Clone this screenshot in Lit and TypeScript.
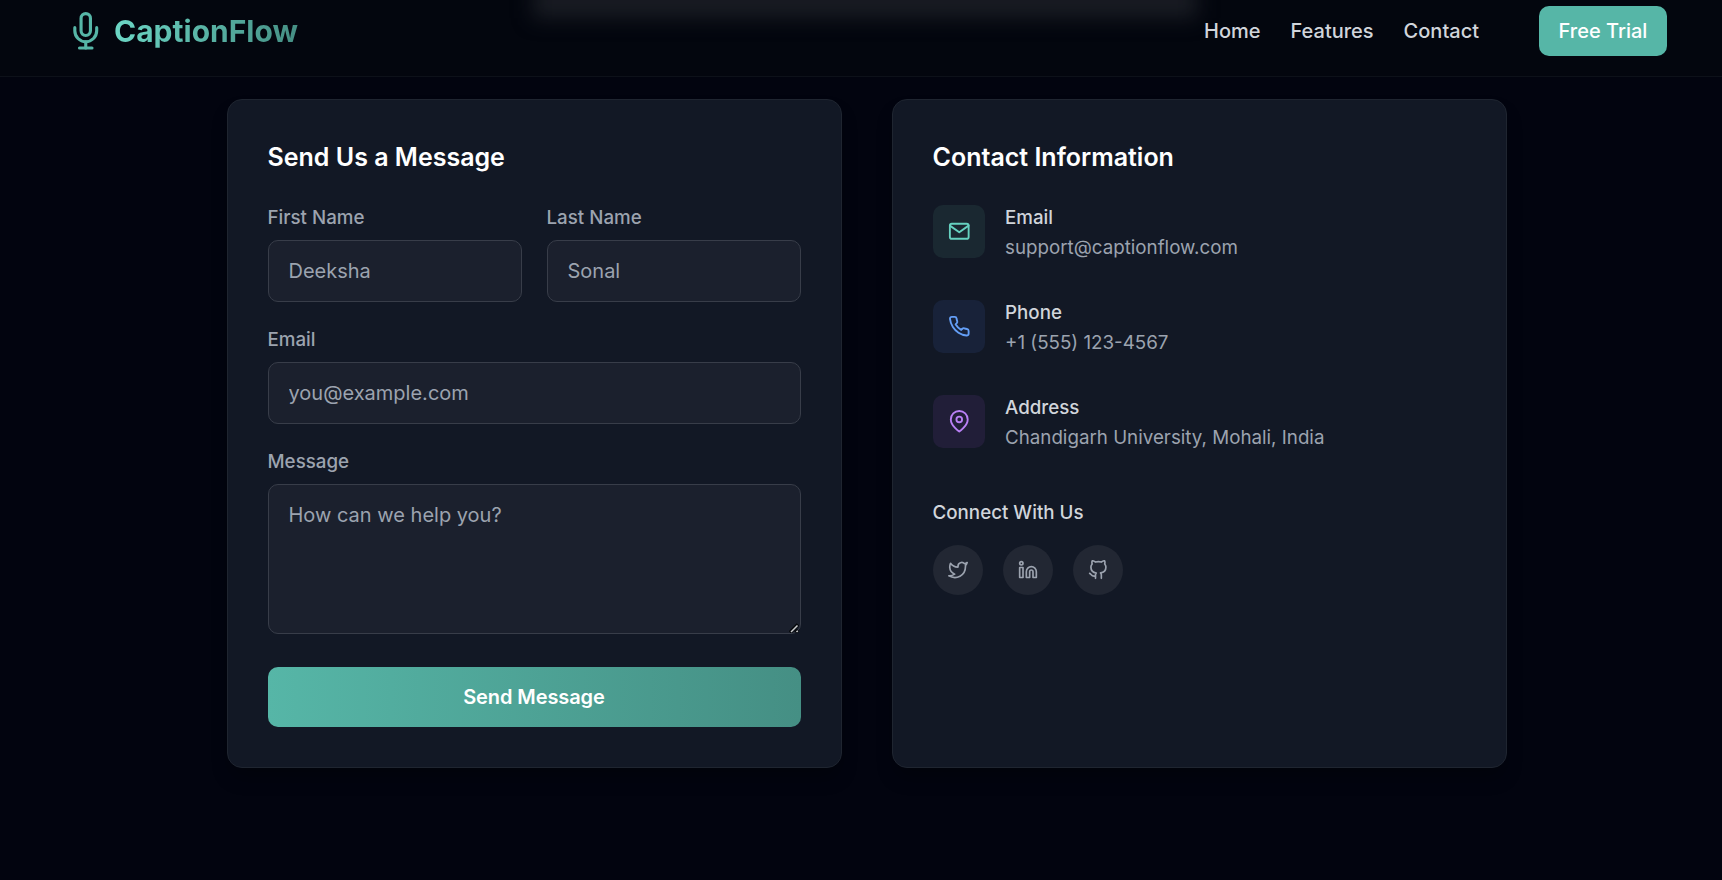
import { LitElement, html, css, svg } from "lit";
import { customElement, property } from "lit/decorators.js";

const icons: Record<string, unknown> = {
  mic: svg`<path d="M12 1a3 3 0 0 0-3 3v8a3 3 0 0 0 6 0V4a3 3 0 0 0-3-3z"/><path d="M19 10v2a7 7 0 0 1-14 0v-2"/><line x1="12" y1="19" x2="12" y2="23"/><line x1="8" y1="23" x2="16" y2="23"/>`,
  mail: svg`<path d="M4 4h16c1.1 0 2 .9 2 2v12c0 1.1-.9 2-2 2H4c-1.1 0-2-.9-2-2V6c0-1.1.9-2 2-2z"/><polyline points="22,6 12,13 2,6"/>`,
  phone: svg`<path d="M22 16.92v3a2 2 0 0 1-2.18 2 19.79 19.79 0 0 1-8.63-3.07 19.5 19.5 0 0 1-6-6 19.79 19.79 0 0 1-3.07-8.67A2 2 0 0 1 4.11 2h3a2 2 0 0 1 2 1.72 12.84 12.84 0 0 0 .7 2.81 2 2 0 0 1-.45 2.11L8.09 9.91a16 16 0 0 0 6 6l1.27-1.27a2 2 0 0 1 2.11-.45 12.84 12.84 0 0 0 2.81.7A2 2 0 0 1 22 16.92z"/>`,
  pin: svg`<path d="M21 10c0 7-9 13-9 13s-9-6-9-13a9 9 0 0 1 18 0z"/><circle cx="12" cy="10" r="3"/>`,
  twitter: svg`<path d="M23 3a10.9 10.9 0 0 1-3.14 1.53 4.48 4.48 0 0 0-7.86 3v1A10.66 10.66 0 0 1 3 4s-4 9 5 13a11.64 11.64 0 0 1-7 2c9 5 20 0 20-11.5a4.5 4.5 0 0 0-.08-.83A7.72 7.72 0 0 0 23 3z"/>`,
  linkedin: svg`<path d="M16 8a6 6 0 0 1 6 6v7h-4v-7a2 2 0 0 0-4 0v7h-4v-7a6 6 0 0 1 6-6z"/><rect x="2" y="9" width="4" height="12"/><circle cx="4" cy="4" r="2"/>`,
  github: svg`<path d="M9 19c-5 1.5-5-2.5-7-3m14 6v-3.87a3.37 3.37 0 0 0-.94-2.61c3.14-.35 6.44-1.54 6.44-7A5.44 5.44 0 0 0 20 4.77 5.07 5.07 0 0 0 19.91 1S18.73.65 16 2.48a13.38 13.38 0 0 0-7 0C6.27.65 5.09 1 5.09 1A5.07 5.07 0 0 0 5 4.77a5.44 5.44 0 0 0-1.5 3.78c0 5.42 3.3 6.61 6.44 7A3.37 3.37 0 0 0 9 18.13V22"/>`,
};

@customElement("line-icon")
class LineIcon extends LitElement {
  @property() name = "";
  static styles = css`
    :host { display: block; width: 20px; height: 20px; }
    svg { display: block; width: 100%; height: 100%; fill: none; stroke: currentColor; stroke-width: 2; stroke-linecap: round; stroke-linejoin: round; }
  `;
  render() {
    return html`<svg viewBox="0 0 24 24" aria-hidden="true">${icons[this.name]}</svg>`;
  }
}

@customElement("site-header")
class SiteHeader extends LitElement {
  static styles = css`
    :host { display: block; height: 77px; box-sizing: border-box; border-bottom: 1px solid #0d1119; background: #03060e; overflow: hidden; position: relative; }
    .bar { display: flex; align-items: center; justify-content: space-between; height: 62px; padding: 0 55px 0 67px; position: relative; }
    .logo { display: flex; align-items: center; gap: 9.5px; }
    .logo line-icon { width: 37.5px; height: 37.5px; color: #56b6a7; }
    .name { font-size: 30px; line-height: 45px; font-weight: 700; background: linear-gradient(90deg, #6cd6c5, #458f84); -webkit-background-clip: text; background-clip: text; color: transparent; }
    .nav { display: flex; align-items: center; gap: 30px; font-size: 20px; font-weight: 500; color: #d1d5db; }
    .trial { margin-left: 30px; width: 128px; height: 50px; padding: 0; border: 0; border-radius: 10px; background: #56b6a7; color: #fff; font: inherit; }
    .haze { position: absolute; left: 533px; top: -14px; width: 664px; height: 32px; background: #191c23; filter: blur(10px); }
  `;
  render() {
    return html`
      <div class="haze"></div>
      <div class="bar">
        <div class="logo"><line-icon name="mic"></line-icon><span class="name">CaptionFlow</span></div>
        <nav class="nav"><span>Home</span><span>Features</span><span>Contact</span><button class="trial">Free Trial</button></nav>
      </div>`;
  }
}

@customElement("app-root")
class AppRoot extends LitElement {
  static styles = css`
    :host { display: block; height: 100vh; overflow: hidden; background: #02040f; font-family: Inter, sans-serif; color: #fff; font-size: 20px; }
    .cards { display: grid; grid-template-columns: 615px 615px; gap: 50px; margin: 22px 0 0 226.5px; height: 669px; }
    .card { box-sizing: border-box; border: 1px solid #1f2530; border-radius: 15px; background: #121825; padding: 40px; box-shadow: 0 12px 19px -4px rgba(0, 0, 0, .3); }
    h3 { margin: 0; font-size: 25px; line-height: 35px; font-weight: 600; }
    .form { display: grid; grid-template-columns: 1fr 1fr; gap: 25px; margin-top: 30px; }
    .field { display: flex; flex-direction: column; }
    .wide { grid-column: 1 / -1; }
    label { font-size: 18.75px; line-height: 25px; font-weight: 500; color: #9ca3af; margin-bottom: 10px; }
    input, textarea { box-sizing: border-box; width: 100%; height: 62px; margin: 0; padding: 15px 20px; border: 1px solid #383d49; border-radius: 10px; background: #1b202d; font: inherit; line-height: 30px; color: #fff; }
    textarea { display: block; height: 150px; resize: none; }
    .area { position: relative; }
    .grip { position: absolute; right: 2px; bottom: 1px; width: 10px; height: 10px; fill: none; }
    .grip .dark { stroke: #05070b; stroke-width: 3.6; }
    .grip .light { stroke: #c9cbce; stroke-width: 1.5; }
    ::placeholder { color: #9ca3af; opacity: 1; }
    .send { width: 100%; height: 60px; margin-top: 8px; border: 0; border-radius: 10px; background: linear-gradient(90deg, #56b6a7, #458f84); color: #fff; font: inherit; font-weight: 600; letter-spacing: -.09px; }
    .info { display: flex; flex-direction: column; gap: 30px; margin-top: 30px; }
    .item { display: flex; gap: 20px; height: 65px; }
    .tile { display: grid; place-items: center; width: 52.5px; height: 52.5px; border-radius: 10px; }
    .tile line-icon { width: 22.5px; height: 22.5px; }
    .mail { background: #1a2831; color: #66d1c0; }
    .phone { background: #182239; color: #649ff7; }
    .pin { background: #211e38; color: #b980f5; }
    .strong { font-size: 18.75px; line-height: 25px; font-weight: 500; color: #d1d5db; }
    .value { margin-top: 4px; font-size: 18.75px; line-height: 28px; color: #9ca3af; }
    .connect { margin-top: 40px; }
    .social { display: flex; gap: 20px; margin-top: 20px; }
    .dot { display: grid; place-items: center; width: 50px; height: 50px; border-radius: 50%; background: #222733; color: #9ca3af; }
  `;
  private item(kind: string, title: string, value: string) {
    return html`<div class="item"><div class="tile ${kind}"><line-icon name=${kind}></line-icon></div>
      <div><div class="strong">${title}</div><div class="value">${value}</div></div></div>`;
  }
  render() {
    return html`
      <site-header></site-header>
      <main class="cards">
        <section class="card">
          <h3>Send Us a Message</h3>
          <div class="form">
            <div class="field"><label>First Name</label><input placeholder="Deeksha" /></div>
            <div class="field"><label>Last Name</label><input placeholder="Sonal" /></div>
            <div class="field wide"><label>Email</label><input placeholder="you@example.com" /></div>
            <div class="field wide"><label>Message</label>
              <div class="area"><textarea placeholder="How can we help you?"></textarea>
                <svg class="grip" viewBox="0 0 10 10"><path class="dark" d="M1 9.5 9 1.5M6.5 9.5 9 7"/><path class="light" d="M2 9 8.5 2.5M7.5 9 8.8 7.7"/></svg>
              </div>
            </div>
            <div class="wide"><button class="send">Send Message</button></div>
          </div>
        </section>
        <section class="card">
          <h3>Contact Information</h3>
          <div class="info">
            ${this.item("mail", "Email", "support@captionflow.com")}
            ${this.item("phone", "Phone", "+1 (555) 123-4567")}
            ${this.item("pin", "Address", "Chandigarh University, Mohali, India")}
          </div>
          <div class="strong connect">Connect With Us</div>
          <div class="social">
            ${["twitter", "linkedin", "github"].map((n) => html`<span class="dot"><line-icon name=${n}></line-icon></span>`)}
          </div>
        </section>
      </main>`;
  }
}
